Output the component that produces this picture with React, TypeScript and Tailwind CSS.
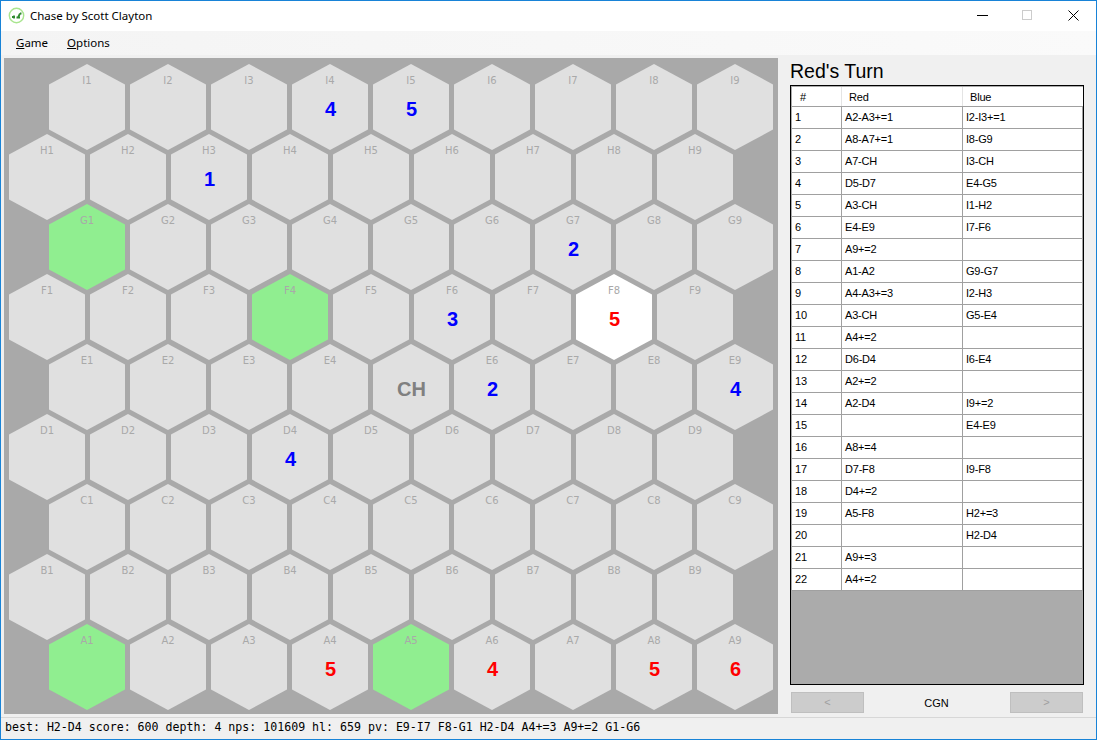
import React from "react";

const pieces: Record<string, { v: string; c: string }> = {
  I4: { v: "4", c: "text-[#0000ff]" },
  I5: { v: "5", c: "text-[#0000ff]" },
  H3: { v: "1", c: "text-[#0000ff]" },
  G7: { v: "2", c: "text-[#0000ff]" },
  F6: { v: "3", c: "text-[#0000ff]" },
  F8: { v: "5", c: "text-[#ff0000]" },
  E6: { v: "2", c: "text-[#0000ff]" },
  E9: { v: "4", c: "text-[#0000ff]" },
  D4: { v: "4", c: "text-[#0000ff]" },
  A4: { v: "5", c: "text-[#ff0000]" },
  A6: { v: "4", c: "text-[#ff0000]" },
  A8: { v: "5", c: "text-[#ff0000]" },
  A9: { v: "6", c: "text-[#ff0000]" },
  E5: { v: "CH", c: "text-[#808080]" },
};
const green = ["G1", "F4", "A1", "A5"];
const rows = ["I", "H", "G", "F", "E", "D", "C", "B", "A"];
const cols = [1, 2, 3, 4, 5, 6, 7, 8, 9];

const moves: [string, string, string][] = [
  ["1", "A2-A3+=1", "I2-I3+=1"],
  ["2", "A8-A7+=1", "I8-G9"],
  ["3", "A7-CH", "I3-CH"],
  ["4", "D5-D7", "E4-G5"],
  ["5", "A3-CH", "I1-H2"],
  ["6", "E4-E9", "I7-F6"],
  ["7", "A9+=2", ""],
  ["8", "A1-A2", "G9-G7"],
  ["9", "A4-A3+=3", "I2-H3"],
  ["10", "A3-CH", "G5-E4"],
  ["11", "A4+=2", ""],
  ["12", "D6-D4", "I6-E4"],
  ["13", "A2+=2", ""],
  ["14", "A2-D4", "I9+=2"],
  ["15", "", "E4-E9"],
  ["16", "A8+=4", ""],
  ["17", "D7-F8", "I9-F8"],
  ["18", "D4+=2", ""],
  ["19", "A5-F8", "H2+=3"],
  ["20", "", "H2-D4"],
  ["21", "A9+=3", ""],
  ["22", "A4+=2", ""],
];

function Hex({ id }: { id: string }) {
  const p = pieces[id];
  const fill = green.includes(id) ? "bg-[#90ee90]" : id === "F8" ? "bg-white" : "bg-[#e0e0e0]";
  return (
    <div
      className={`${fill} w-[76px] h-[86px] flex flex-col items-center [clip-path:polygon(50%_0,100%_23.7%,100%_76.3%,50%_100%,0_76.3%,0_23.7%)]`}
    >
      <div className="h-[12px] mt-[11px] text-[10px] leading-[12px] text-[#a9a9a9] font-['DejaVu_Sans',sans-serif]">
        {id === "E5" ? "" : id}
      </div>
      {p && (
        <div className={`${p.c} mt-[10px] pl-[1px] h-[24px] text-[20px] leading-[24px] font-bold font-['Liberation_Sans',sans-serif]`}>
          {p.v}
        </div>
      )}
    </div>
  );
}

function Board() {
  return (
    <div className="w-[774px] h-[656px] bg-[#a9a9a9] pt-[6px] overflow-hidden flex flex-col">
      {rows.map((r, i) => (
        <div
          key={r}
          className={`flex gap-[5px] ${i % 2 === 0 ? "pl-[45px]" : "pl-[5px]"} ${i > 0 ? "-mt-[16px]" : ""}`}
        >
          {cols.map((c) => (
            <Hex key={c} id={`${r}${c}`} />
          ))}
        </div>
      ))}
    </div>
  );
}

function MoveTable() {
  return (
    <div className="mt-[2px] w-[294px] h-[600px] border border-black bg-[#ababab] pl-px pt-px font-['Liberation_Sans',sans-serif] text-[11px] tracking-[-0.2px] text-black">
      <div className="flex h-[20px] bg-white border-b border-[#a0a0a0] items-center">
        <div className="w-[50px] border-r border-[#e4e4e4] h-full pl-[8px] leading-[21px]">#</div>
        <div className="w-[121px] border-r border-[#e4e4e4] h-full pl-[7px] leading-[21px]">Red</div>
        <div className="w-[120px] h-full pl-[7px] leading-[21px]">Blue</div>
      </div>
      {moves.map(([n, a, b]) => (
        <div key={n} className="flex h-[22px] bg-white border-b border-[#a0a0a0] leading-[21px]">
          <div className="w-[50px] border-r border-[#a0a0a0] pl-[3px]">{n}</div>
          <div className="w-[121px] border-r border-[#a0a0a0] pl-[3px]">{a}</div>
          <div className="w-[120px] border-r border-[#a0a0a0] pl-[3px]">{b}</div>
        </div>
      ))}
    </div>
  );
}

export default function App() {
  return (
    <div className="w-[1097px] h-[740px] border border-[#1883d7] bg-[#f0f0f0] flex flex-col overflow-hidden">
      <div className="h-[30px] shrink-0 bg-white flex items-center pl-[7px] font-['Noto_Sans',sans-serif] text-[11.5px] text-black">
        <svg width="17" height="17" viewBox="0 0 17 17" className="mr-[5px] mb-[1px]">
          <circle cx="8.5" cy="8.5" r="7.2" fill="#fff" stroke="#a9e58f" strokeWidth="1.4" />
          <path d="M4 10h3M6 8.5v3M8.5 10.5h3.5M10 10.5l2-4M12 6.5h1.5" stroke="#2f8a2f" strokeWidth="1.8" fill="none" />
        </svg>
        <span>Chase by Scott Clayton</span>
        <div className="ml-auto flex items-center h-full pb-[2px]">
          <div className="w-[45px] flex justify-center pr-[1px]">
            <svg width="11" height="11" viewBox="0 0 11 11">
              <path d="M0 5.5h11" stroke="#000" strokeWidth="1" />
            </svg>
          </div>
          <div className="w-[45px] flex justify-center">
            <svg width="11" height="11" viewBox="0 0 11 11">
              <rect x="0.5" y="0.5" width="9" height="9" fill="none" stroke="#cccccc" />
            </svg>
          </div>
          <div className="w-[46px] flex justify-center">
            <svg width="11" height="11" viewBox="0 0 11 11">
              <path d="M0.5 0.5l10 10M10.5 0.5l-10 10" stroke="#000" strokeWidth="1" />
            </svg>
          </div>
        </div>
      </div>
      <div className="h-[24px] shrink-0 bg-gradient-to-r from-[#f4f4f4] to-[#fafafa] flex items-center pl-[15px] gap-[19px] font-['Noto_Sans',sans-serif] text-[11.5px] text-black">
        <span>
          <span className="underline">G</span>ame
        </span>
        <span>
          <span className="underline">O</span>ptions
        </span>
      </div>
      <div className="flex pl-[3px] pt-[3px] flex-1 min-h-0">
        <Board />
        <div className="ml-[12px] flex flex-col w-[294px]">
          <div className="h-[25px] text-[19.5px] leading-[26px] text-black font-['Liberation_Sans',sans-serif]">Red's Turn</div>
          <MoveTable />
          <div className="mt-[7px] flex items-center justify-between px-px font-['Liberation_Sans',sans-serif] text-[11px]">
            <div className="w-[73px] h-[21px] bg-[#cccccc] border border-[#bfbfbf] text-[#a0a0a0] flex items-center justify-center">&lt;</div>
            <div className="text-black pt-[2px] pr-[1px]">CGN</div>
            <div className="w-[73px] h-[21px] bg-[#cccccc] border border-[#bfbfbf] text-[#a0a0a0] flex items-center justify-center">&gt;</div>
          </div>
        </div>
      </div>
      <div className="h-[22px] shrink-0 border-t border-[#d7d7d7] flex items-center pl-[4px] pb-[2px] font-['DejaVu_Sans_Mono',monospace] text-[11.6px] text-black whitespace-pre">
        best: H2-D4 score: 600 depth: 4 nps: 101609 hl: 659 pv: E9-I7 F8-G1 H2-D4 A4+=3 A9+=2 G1-G6
      </div>
    </div>
  );
}
